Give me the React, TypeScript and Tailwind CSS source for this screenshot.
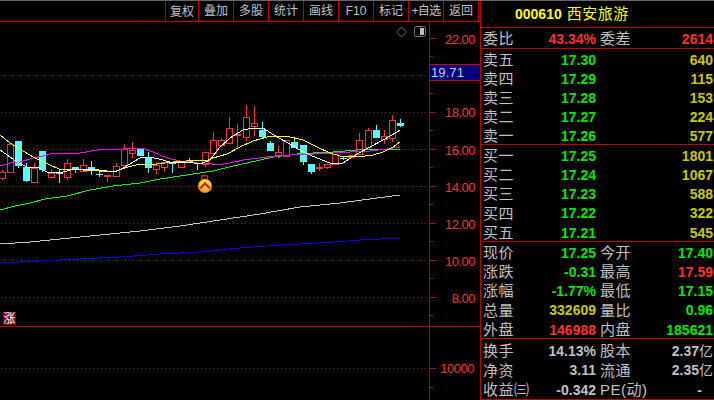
const RED = "#ff3232";
const CYAN = "#54ffff";

type Candle = [number, number, number, number, number, 0 | 1];

const candles: Candle[] = [
  [2, 170, 180, 172, 178, 1], [10, 144, 172, 144, 172, 1], [18, 141, 168, 141, 166, 0],
  [26, 163, 182, 167, 181, 0], [34, 163, 182, 168, 182, 1], [42, 151, 172, 151, 170, 0],
  [51, 169, 177, 173, 177, 1], [59, 170, 183, 172, 174, 0], [67, 159, 180, 163, 177, 1],
  [75, 167, 173, 167, 170, 0], [83, 159, 172, 165, 171, 1], [91, 161, 175, 167, 171, 0],
  [99, 170, 177, 174, 174, 0], [107, 175, 182, 175, 176, 1], [116, 163, 177, 166, 176, 1],
  [124, 144, 167, 149, 165, 1], [132, 142, 158, 150, 153, 1], [140, 149, 156, 149, 156, 0],
  [148, 152, 173, 157, 168, 0], [156, 162, 174, 165, 169, 1], [164, 162, 172, 162, 167, 1],
  [172, 162, 173, 162, 164, 0], [181, 161, 167, 161, 167, 1], [189, 158, 163, 161, 163, 0],
  [197, 163, 170, 163, 164, 0], [205, 152, 167, 152, 164, 1], [213, 132, 156, 140, 153, 1],
  [221, 138, 147, 140, 145, 1], [229, 117, 143, 128, 143, 1], [237, 124, 147, 134, 135, 1],
  [246, 105, 141, 117, 137, 1], [254, 106, 136, 123, 126, 1], [262, 122, 139, 130, 137, 0],
  [270, 141, 151, 143, 151, 0], [278, 146, 158, 152, 155, 1], [286, 140, 156, 140, 156, 1],
  [294, 137, 148, 142, 148, 0], [303, 145, 165, 145, 162, 0], [311, 164, 174, 164, 172, 0],
  [319, 163, 171, 167, 167, 1], [327, 164, 169, 164, 167, 1], [335, 154, 165, 154, 164, 1],
  [343, 157, 160, 158, 158, 0], [351, 155, 157, 155, 157, 1], [359, 133, 154, 140, 154, 1],
  [368, 128, 147, 130, 147, 1], [376, 125, 138, 130, 138, 0], [384, 130, 144, 136, 139, 1],
  [392, 115, 142, 120, 138, 1], [400, 119, 127, 123, 126, 0],
];

const yellow = "0,135 10,143 20,149 33,157 50,165 59,169 83,170 100,171 116,171 128,167 140,164 157,164 173,162 200,160 205,161 213,158 227,154 240,147 253,141 267,137 280,136 290,137 303,140 317,147 330,153 340,156 357,157 373,155 383,152 393,147 400,142";
const white = "0,150 10,157 17,162 27,167 37,167 47,172 60,173 70,170 90,169 107,171 117,171 125,167 140,158 150,157 163,160 173,163 187,162 200,164 210,160 220,147 230,138 243,130 253,128 263,128 277,137 290,144 303,152 317,158 330,163 343,163 357,154 370,147 383,140 397,132 400,130";
const magenta = "0,166 10,163 20,162 33,158 43,156 50,154 63,153 80,153 97,150 113,149 123,149 142,148 153,152 167,158 180,161 197,163 207,163 217,165 230,163 243,160 267,157 290,155 313,154 333,153 350,152 370,151 387,149 400,147";
const green = "0,210 15,206 30,203 45,199 67,196 90,190 113,186 140,183 160,179 187,175 213,171 233,166 247,163 273,157 290,155 297,154 313,153 333,152 357,150 383,149 400,150";
const silver = "0,244 30,242 60,239 100,235 140,231 180,226 220,220 260,214 300,207 340,203 370,199 400,195";
const blue = "0,263 40,261 80,259 120,257 160,254 200,252 240,248 280,245 320,243 360,240 400,238";

const GRID = [75, 112, 149, 186, 223, 260, 297];

function Chart() {
  return (
    <svg width={429} height={304} viewBox="0 22 429 304" className="block" shapeRendering="crispEdges">
      <defs>
        <radialGradient id="gold" cx="50%" cy="35%" r="65%">
          <stop offset="0%" stopColor="#fff27a" />
          <stop offset="60%" stopColor="#f8c22c" />
          <stop offset="100%" stopColor="#e8801a" />
        </radialGradient>
      </defs>
      {GRID.map((y) => (
        <line key={y} x1={1} x2={429} y1={y + 0.5} y2={y + 0.5} stroke="#b80000" strokeDasharray="1 3" />
      ))}
      {candles.map(([x, wt, wb, bt, bb, up]) => (
        <g key={x}>
          <line x1={x + 0.5} x2={x + 0.5} y1={wt} y2={wb} stroke={up ? RED : CYAN} />
          {up ? (
            bb - bt < 2 ? (
              <rect x={x - 3} y={bt} width={7} height={2} fill={RED} />
            ) : (
              <rect x={x - 2.5} y={bt + 0.5} width={6} height={bb - bt} fill="#000" stroke={RED} />
            )
          ) : (
            <rect x={x - 3} y={bt} width={7} height={Math.max(bb - bt, 1)} fill={CYAN} />
          )}
        </g>
      ))}
      <polyline points={silver} fill="none" stroke="#c8c8c8" />
      <polyline points={blue} fill="none" stroke="#0000ff" />
      <polyline points={green} fill="none" stroke="#00ff00" />
      <polyline points={magenta} fill="none" stroke="#ff00ff" />
      <polyline points={yellow} fill="none" stroke="#ffff00" />
      <polyline points={white} fill="none" stroke="#ffffff" />
      <g shapeRendering="auto">
        <rect x={201.5} y={175.5} width={6} height={5} rx={1.5} fill="none" stroke="#e81818" strokeWidth={1.5} />
        <circle cx={205} cy={186} r={7} fill="url(#gold)" />
        <path d="M200 188.5 L205 183.5 L210 188.5" fill="none" stroke="#d42a10" strokeWidth={2.4} />
        <path d="M396.5 32 L401.5 27 L406.5 32 L401.5 37 Z" fill="none" stroke="#6a6a6a" />
        <rect x={414.5} y={26.5} width={11} height={10} rx={2} fill="#000" stroke="#777" />
        <rect x={420} y={28} width={4} height={7} fill="#bdbdbd" />
      </g>
    </svg>
  );
}

const AXIS = ["22.00", "", "18.00", "16.00", "14.00", "12.00", "10.00", "8.00"];

function AxisLabel({ text, nudge }: { text: string; nudge?: boolean }) {
  return (
    <>
      <span className="w-[6px] h-px bg-[#c00000] shrink-0" />
      <span
        className={
          nudge
            ? "flex-1 text-right pr-[5px] pt-[2px] text-[13px] tracking-[-0.5px] text-[#ff3232]"
            : "flex-1 text-right pr-[6px] text-[13px] tracking-[-0.5px] text-[#ff3232]"
        }
      >
        {text}
      </span>
    </>
  );
}

function Axis() {
  return (
    <div className="relative w-[51px] h-[304px] border-l border-[#b00000] flex flex-col">
      {AXIS.map((t, i) => (
        <div
          key={i}
          className={
            i === 0
              ? "relative flex items-center h-[34.5px] pb-px"
              : "relative flex items-center h-[37.14px]"
          }
        >
          <AxisLabel text={t} nudge />
          <span className="absolute bottom-0 left-0 w-[3px] h-px bg-[#c00000]" />
        </div>
      ))}
      <div className="absolute left-0 right-0 top-[42px] h-[17px] bg-[#000080] border-y border-[#d00000] flex items-center pl-px text-[13px] tracking-[0.1px] leading-none text-[#d0d0d0]">
        19.71
      </div>
    </div>
  );
}

const TOOLS = ["复权", "叠加", "多股", "统计", "画线", "F10", "标记", "+自选", "返回"];

function Toolbar() {
  return (
    <div className="h-[21px] border-b border-[#c00000] flex justify-end pr-px text-[12px] text-[#c4c4c4]">
      {TOOLS.map((t, i) => (
        <div
          key={t}
          className={
            i === 0
              ? "w-[33px] flex items-center justify-center border-l border-[#c00000] mt-px"
              : i === 8
                ? "w-[36px] flex items-center justify-center border-x border-[#c00000]"
                : "w-[35px] flex items-center justify-center border-l border-[#c00000]"
          }
        >
          {t === "+自选" ? <span className="whitespace-nowrap tracking-[-0.6px]">{t}</span> : t}
        </div>
      ))}
    </div>
  );
}

const R = "text-[#ff3232]";
const G = "text-[#00e800]";
const Y = "text-[#c8c800]";
const W = "text-[#c0c0c0]";

function Label({ children }: { children: React.ReactNode }) {
  return <span className="text-[15px] font-normal text-[#c0c0c0] tracking-[0.5px] whitespace-nowrap">{children}</span>;
}

function Pair({ a, b, c, d, cb, cd, h }: { a: string; b: React.ReactNode; c: string; d: React.ReactNode; cb: string; cd: string; h: string }) {
  return (
    <div className={"grid grid-cols-[113px_1fr] items-center " + h}>
      <div className="flex items-center justify-between">
        <Label>{a}</Label>
        <span className={"text-[14px] font-bold " + cb}>{b}</span>
      </div>
      <div className="flex items-center justify-between pl-[4px]">
        <Label>{c}</Label>
        <span className={"text-[14px] font-bold whitespace-nowrap " + cd}>{d}</span>
      </div>
    </div>
  );
}

function Level({ a, p, v, h }: { a: string; p: string; v: string; h: string }) {
  return (
    <div className={"grid grid-cols-[113px_1fr] items-center " + h}>
      <div className="flex items-center justify-between">
        <Label>{a}</Label>
        <span className={"text-[14px] font-bold " + G}>{p}</span>
      </div>
      <span className={"text-right text-[14px] font-bold " + Y}>{v}</span>
    </div>
  );
}

const Yi = ({ n }: { n: string }) => (
  <>
    {n}
    <span className="text-[14px] font-normal">亿</span>
  </>
);

function Quote() {
  return (
    <div className="w-[234px] h-[399px] border-l border-b border-[#c00000] flex flex-col">
      <div className="h-[26px] border-b border-[#c00000] shrink-0 box-content flex items-center pl-[34px] gap-[5px] text-[#ffff00]">
        <span className="text-[14px] font-bold">000610</span>
        <span className="text-[15px] tracking-[0.5px]">西安旅游</span>
      </div>
      <div className="h-[21px] border-b border-[#c00000] pl-[2px] pr-px shrink-0">
        <Pair a="委比" b="43.34%" c="委差" d="2614" cb={R} cd={R} h="h-[20px]" />
      </div>
      <div className="h-[96px] border-b border-[#c00000] pl-[2px] pr-px shrink-0">
        <Level a="卖五" p="17.30" v="640" h="h-[19px]" />
        <Level a="卖四" p="17.29" v="115" h="h-[19px]" />
        <Level a="卖三" p="17.28" v="153" h="h-[19px]" />
        <Level a="卖二" p="17.27" v="224" h="h-[19px]" />
        <Level a="卖一" p="17.26" v="577" h="h-[19px]" />
      </div>
      <div className="h-[97px] border-b border-[#c00000] pl-[2px] pr-px shrink-0">
        <Level a="买一" p="17.25" v="1801" h="h-[19.2px]" />
        <Level a="买二" p="17.24" v="1067" h="h-[19.2px]" />
        <Level a="买三" p="17.23" v="588" h="h-[19.2px]" />
        <Level a="买四" p="17.22" v="322" h="h-[19.2px]" />
        <Level a="买五" p="17.21" v="545" h="h-[19.2px]" />
      </div>
      <div className="h-[97px] border-b border-[#c00000] pl-[2px] pr-px shrink-0">
        <Pair a="现价" b="17.25" c="今开" d="17.40" cb={G} cd={G} h="h-[19.2px]" />
        <Pair a="涨跌" b="-0.31" c="最高" d="17.59" cb={G} cd={R} h="h-[19.2px]" />
        <Pair a="涨幅" b="-1.77%" c="最低" d="17.15" cb={G} cd={G} h="h-[19.2px]" />
        <Pair a="总量" b="332609" c="量比" d="0.96" cb={Y} cd={G} h="h-[19.2px]" />
        <Pair a="外盘" b="146988" c="内盘" d="185621" cb={R} cd={G} h="h-[19.2px]" />
      </div>
      <div className="flex-1 pl-[2px] pr-px pt-px">
        <Pair a="换手" b="14.13%" c="股本" d={<Yi n="2.37" />} cb={W} cd={W} h="h-[19.5px]" />
        <Pair a="净资" b="3.11" c="流通" d={<Yi n="2.35" />} cb={W} cd={W} h="h-[19.5px]" />
        <Pair a="收益㈢" b="-0.342" c="PE(动)" d={<span className="pr-[11px]">-</span>} cb={W} cd={W} h="h-[19.5px]" />
      </div>
    </div>
  );
}

export default function App() {
  return (
    <div
      className="w-[714px] h-[400px] bg-black overflow-hidden flex flex-col"
      style={{ fontFamily: '"Liberation Sans","Noto Sans CJK SC",sans-serif' }}
    >
      <div className="h-px bg-[#666666] shrink-0" />
      <div className="flex flex-1">
        <div className="w-[480px] flex flex-col">
          <Toolbar />
          <div className="relative flex h-[304px]">
            <Chart />
            <Axis />
            <div className="absolute left-[3px] bottom-px w-[13px] h-[13px] bg-[#8b0000] flex items-center justify-center text-[12px] leading-none text-white">
              涨
            </div>
          </div>
          <div className="flex flex-1 border-t border-[#c00000]">
            <div className="w-[429px] pt-[41px]">
              <svg width={429} height={1} className="block" shapeRendering="crispEdges">
                <line x1={1} x2={429} y1={0.5} y2={0.5} stroke="#b80000" strokeDasharray="1 3" />
              </svg>
            </div>
            <div className="w-[51px] border-l border-[#b00000] pt-[32px] flex flex-col">
              <div className="flex items-center h-[19px] w-full">
                <AxisLabel text="10000" />
              </div>
              <div className="w-[3px] h-px bg-[#c00000] mt-[9px]" />
            </div>
          </div>
        </div>
        <Quote />
      </div>
    </div>
  );
}
